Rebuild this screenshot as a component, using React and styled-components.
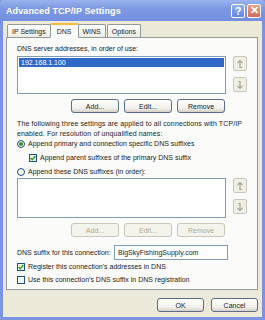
import React from "react";
import styled, { createGlobalStyle } from "styled-components";

const Global = createGlobalStyle`
  html, body { margin: 0; padding: 0; background: #fff; }
  * { box-sizing: border-box; }
`;

const Win = styled.div`
  width: 265px;
  height: 320px;
  display: flex;
  flex-direction: column;
  background: #7b93e0;
  padding: 0 3px 3px 3px;
  font-family: "Liberation Sans", Arial, sans-serif;
  font-size: 7px;
  color: #222;
`;

const TitleBar = styled.div`
  height: 21px;
  display: flex;
  align-items: center;
  margin: 0 -3px;
  padding-left: 6px;
  padding-right: 4px;
  background: linear-gradient(#9bb3ee, #7d98e3 40%, #7390e0);
  color: #fff;
  font-weight: bold;
  font-size: 9px;
  border-radius: 4px 4px 0 0;
`;

const Title = styled.span`
  flex: 1;
  letter-spacing: 0.1px;
`;

const CapButton = styled.div`
  width: 14px;
  height: 14px;
  margin-left: 2px;
  border: 1px solid #fff;
  border-radius: 2px;
  display: flex;
  align-items: center;
  justify-content: center;
  color: #fff;
  font-size: 11px;
  font-weight: bold;
  background: ${(p) => (p.$close ? "linear-gradient(#e7a08c, #d26b55)" : "linear-gradient(#8fb0f3, #5f86e4)")};
`;

const Body = styled.div`
  flex: 1;
  background: #ece9d8;
  display: flex;
  flex-direction: column;
  padding: 3px 4px 5px 3px;
`;

const Tabs = styled.div`
  display: flex;
  align-items: flex-end;
  height: 13px;
  padding-left: 1px;
  position: relative;
  z-index: 1;
`;

const Tab = styled.div`
  height: ${(p) => (p.$active ? "15px" : "13px")};
  padding: 0 ${(p) => (p.$active ? "6px" : "4px")};
  display: flex;
  align-items: center;
  border: 1px solid #919b9c;
  border-bottom: ${(p) => (p.$active ? "1px solid #fcfcfe" : "none")};
  border-top: ${(p) => (p.$active ? "2px solid #f5b93e" : "1px solid #919b9c")};
  border-radius: 2px 2px 0 0;
  background: ${(p) => (p.$active ? "#fcfcfe" : "linear-gradient(#fff, #ecebe5)")};
  margin-right: ${(p) => (p.$active ? "-1px" : "1px")};
  margin-left: ${(p) => (p.$active ? "-2px" : "0")};
  ${(p) => (p.$active ? "margin-bottom: -1px;" : "")}
`;

const Panel = styled.div`
  flex: 1;
  border: 1px solid #919b9c;
  background: #fbfbf9;
  padding: 6px 10px 0 10px;
  display: flex;
  flex-direction: column;
`;

const Label = styled.div`
  line-height: 9px;
`;

const ListRow = styled.div`
  display: flex;
  gap: 7px;
  margin-top: ${(p) => p.$top || 0}px;
`;

const ListBox = styled.div`
  width: 209px;
  height: ${(p) => p.$h}px;
  border: 1px solid #7f9db9;
  background: #fff;
  padding: 1px;
`;

const Selected = styled.div`
  background: #3169c6;
  color: #fff;
  height: 9px;
  line-height: 9px;
  padding-left: 2px;
`;

const ArrowCol = styled.div`
  display: flex;
  flex-direction: column;
  gap: ${(p) => p.$gap}px;
`;

const ArrowBtn = styled.div`
  width: 14px;
  height: 15px;
  border: 1px solid #c9c7ba;
  border-radius: 2px;
  background: #f0efe6;
  display: flex;
  align-items: center;
  justify-content: center;
`;

const BtnRow = styled.div`
  display: flex;
  justify-content: flex-end;
  gap: 5px;
  margin-top: ${(p) => p.$top}px;
  padding-right: ${(p) => p.$right || 0}px;
`;

const Button = styled.div`
  width: ${(p) => p.$w || 48}px;
  height: 14px;
  border: 1px solid ${(p) => (p.$disabled ? "#c9c7ba" : "#5a6e8c")};
  border-radius: 3px;
  background: ${(p) => (p.$disabled ? "#f5f4ea" : "linear-gradient(#fff, #f0efe9 70%, #d6d0c5)")};
  color: ${(p) => (p.$disabled ? "#aca899" : "#222")};
  display: flex;
  align-items: center;
  justify-content: center;
`;

const Para = styled.div`
  margin-top: 6px;
  line-height: 10px;
  letter-spacing: 0.12px;
  white-space: nowrap;
`;

const Option = styled.div`
  display: flex;
  align-items: center;
  gap: 3px;
  height: 9px;
  margin-top: ${(p) => p.$top || 0}px;
  margin-left: ${(p) => p.$indent || 0}px;
`;

const Radio = styled.div`
  width: 8px;
  height: 8px;
  border-radius: 50%;
  border: 1px solid #1c5180;
  background: #f4f4f0;
  display: flex;
  align-items: center;
  justify-content: center;
  &::after {
    content: "";
    display: ${(p) => (p.$on ? "block" : "none")};
    width: 4px;
    height: 4px;
    border-radius: 50%;
    background: #3a8c2a;
  }
`;

const Check = styled.div`
  width: 8px;
  height: 8px;
  border: 1px solid #1c5180;
  background: #f4f4f0;
  display: flex;
  align-items: center;
  justify-content: center;
`;

const SuffixRow = styled.div`
  display: flex;
  align-items: center;
  margin-top: 8px;
`;

const SuffixLabel = styled.span`
  width: 97px;
`;

const Input = styled.div`
  width: 114px;
  height: 15px;
  border: 1px solid #7f9db9;
  background: #fff;
  padding-left: 3px;
  display: flex;
  align-items: center;
`;

const Footer = styled.div`
  display: flex;
  justify-content: flex-end;
  gap: 7px;
  margin-top: 8px;
`;

function Arrow({ down, color = "#a8a694" }) {
  return (
    <svg width="6" height="8" viewBox="0 0 6 8">
      {down ? (
        <path d="M1 0.5 H3 V7 M0.5 4.8 L3 7.5 L5.5 4.8" stroke={color} strokeWidth="1.2" fill="none" />
      ) : (
        <path d="M3 0.5 V7.5 H5 M0.5 3.2 L3 0.5 L5.5 3.2" stroke={color} strokeWidth="1.2" fill="none" />
      )}
    </svg>
  );
}

function CheckBox({ on }) {
  return (
    <Check>
      {on && (
        <svg width="6" height="6" viewBox="0 0 6 6">
          <path d="M0.6 3 L2.3 4.8 L5.4 1" stroke="#21a121" strokeWidth="1.4" fill="none" />
        </svg>
      )}
    </Check>
  );
}

export default function App() {
  return (
    <>
      <Global />
      <Win>
        <TitleBar>
          <Title>Advanced TCP/IP Settings</Title>
          <CapButton>?</CapButton>
          <CapButton $close>✕</CapButton>
        </TitleBar>
        <Body>
          <Tabs>
            <Tab>IP Settings</Tab>
            <Tab $active>DNS</Tab>
            <Tab>WINS</Tab>
            <Tab>Options</Tab>
          </Tabs>
          <Panel>
            <Label>DNS server addresses, in order of use:</Label>
            <ListRow $top={3}>
              <ListBox $h={38}>
                <Selected>192.168.1.100</Selected>
              </ListBox>
              <ArrowCol $gap={6}>
                <ArrowBtn><Arrow /></ArrowBtn>
                <ArrowBtn><Arrow down /></ArrowBtn>
              </ArrowCol>
            </ListRow>
            <BtnRow $top={5} $right={22}>
              <Button>Add...</Button>
              <Button>Edit...</Button>
              <Button>Remove</Button>
            </BtnRow>
            <Para>
              The following three settings are applied to all connections with TCP/IP
              <br />
              enabled. For resolution of unqualified names:
            </Para>
            <Option $top={0}>
              <Radio $on />
              <span>Append primary and connection specific DNS suffixes</span>
            </Option>
            <Option $top={5} $indent={12}>
              <CheckBox on />
              <span>Append parent suffixes of the primary DNS suffix</span>
            </Option>
            <Option $top={5}>
              <Radio />
              <span>Append these DNS suffixes (in order):</span>
            </Option>
            <ListRow $top={2}>
              <ListBox $h={40} />
              <ArrowCol $gap={6}>
                <ArrowBtn><Arrow /></ArrowBtn>
                <ArrowBtn><Arrow down /></ArrowBtn>
              </ArrowCol>
            </ListRow>
            <BtnRow $top={5} $right={22}>
              <Button $disabled>Add...</Button>
              <Button $disabled>Edit...</Button>
              <Button $disabled>Remove</Button>
            </BtnRow>
            <SuffixRow>
              <SuffixLabel>DNS suffix for this connection:</SuffixLabel>
              <Input>BigSkyFishingSupply.com</Input>
            </SuffixRow>
            <Option $top={2}>
              <CheckBox on />
              <span>Register this connection's addresses in DNS</span>
            </Option>
            <Option $top={4}>
              <CheckBox />
              <span>Use this connection's DNS suffix in DNS registration</span>
            </Option>
          </Panel>
          <Footer>
            <Button $w={47}>OK</Button>
            <Button $w={47}>Cancel</Button>
          </Footer>
        </Body>
      </Win>
    </>
  );
}
